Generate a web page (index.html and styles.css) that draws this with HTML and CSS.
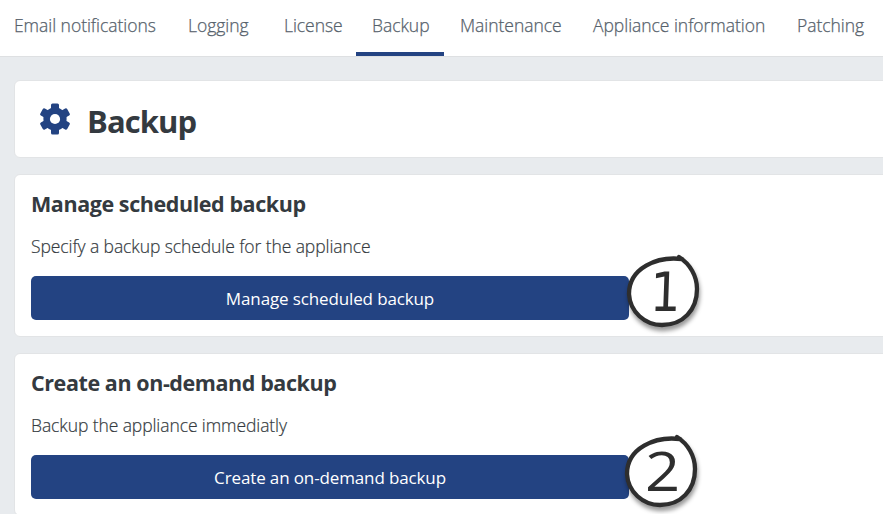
FILE: index.html
```html
<!DOCTYPE html>
<html lang="en">
<head>
<meta charset="utf-8">
<title>Backup</title>
<link rel="stylesheet" href="styles.css">
</head>
<body>
<nav class="tabs">
  <a class="tab t-email">Email notifications</a>
  <a class="tab t-logging">Logging</a>
  <a class="tab t-license">License</a>
  <a class="tab t-backup active">Backup</a>
  <a class="tab t-maintenance">Maintenance</a>
  <a class="tab t-appliance">Appliance information</a>
  <a class="tab t-patching">Patching</a>
</nav>
<main class="content">
  <header class="card title-card">
    <svg class="gear" width="32" height="32" viewBox="-16 -16 32 32">
      <g fill="#234382">
        <circle r="11.6"/>
        <rect id="tooth" x="-4" y="-15.5" width="8" height="31" rx="1.5"/>
        <use href="#tooth" transform="rotate(60)"/>
        <use href="#tooth" transform="rotate(120)"/>
      </g>
      <circle r="5.1" fill="#fff"/>
    </svg>
    <h1>Backup</h1>
  </header>
  <section class="card">
    <h2>Manage scheduled backup</h2>
    <p>Specify a backup schedule for the appliance</p>
    <div class="action">
      <button>Manage scheduled backup</button>
      <svg class="marker" width="84" height="84" viewBox="0 0 84 84">
        <path d="M61 7C36 4 8 16 8 42C9 60 24 73 41 73C62 73 76 58 76 37C76 24 69 12 58 5"/>
        <text class="digit one" transform="translate(28.5 58.5) skewX(-2) scale(.94 1.06)">1</text>
      </svg>
    </div>
  </section>
  <section class="card">
    <h2>Create an on-demand backup</h2>
    <p>Backup the appliance immediatly</p>
    <div class="action">
      <button>Create an on-demand backup</button>
      <svg class="marker second" width="84" height="84" viewBox="0 0 84 84">
        <path d="M61 7C36 4 8 16 8 42C9 60 24 73 41 73C62 73 76 58 76 37C76 24 69 12 58 5"/>
        <text class="digit two" transform="translate(26 58.5) scale(1.16 1.04)">2</text>
      </svg>
    </div>
  </section>
</main>
</body>
</html>
```
FILE: styles.css
```css
* { box-sizing: border-box; }
body {
  margin: 0;
  height: 514px;
  overflow: hidden;
  background: #e8ebee;
  color: #343a40;
  font: 300 17.5px/24px "Open Sans", "Noto Sans", sans-serif;
}
.tabs {
  display: flex;
  height: 57px;
  background: #fff;
  border-bottom: 1px solid #dee0e2;
  color: #56616b;
  letter-spacing: -.04px;
  -webkit-text-stroke: .25px currentColor;
}
.tab {
  flex: none;
  height: 56px;
  padding: 13px 0 0 16px;
  white-space: nowrap;
  border-bottom: 4px solid transparent;
}
.t-email { width: 172px; padding-left: 14px; }
.t-logging { width: 96px; }
.t-license { width: 88px; }
.t-backup { width: 88px; }
.t-maintenance { width: 133px; }
.t-appliance { width: 204px; }
.t-patching { width: 100px; }
.active { border-bottom-color: #234382; }
.content {
  display: flex;
  flex-direction: column;
  gap: 16px;
  padding: 23px 0 0 14px;
}
.card {
  width: 900px;
  height: 163px;
  flex: none;
  padding: 14px 16px;
  background: #fff;
  border: 1px solid #e2e4e6;
  border-radius: 6px;
}
.title-card {
  display: flex;
  height: 78px;
  padding: 22px 24px;
  gap: 16px;
}
h1 {
  margin: 0;
  font-size: 31px;
  font-weight: 700;
  line-height: 36px;
  letter-spacing: -.9px;
}
h2 {
  margin: 0;
  font-size: 21.5px;
  font-weight: 700;
  line-height: 30px;
  letter-spacing: -.42px;
}
p {
  margin: 14px 0 17px;
  line-height: 26px;
  white-space: nowrap;
  letter-spacing: -.09px;
  -webkit-text-stroke: .2px currentColor;
}
.action { position: relative; }
button {
  display: block;
  width: 598px;
  height: 44px;
  padding: 2px 0 0;
  border: 0;
  border-radius: 5px;
  background: #234382;
  color: #fff;
  font: 400 17px/24px "Open Sans", "Noto Sans", sans-serif;
  letter-spacing: -.13px;
}
.marker {
  position: absolute;
  left: 590px;
  top: -24px;
  overflow: visible;
  filter: drop-shadow(1px 4px 2px rgba(0, 0, 0, .4));
}
.marker.second { left: 588px; top: -23px; }
.marker path { fill: #fff; stroke: #2e2e2e; stroke-width: 4.3; stroke-linecap: round; stroke-linejoin: round; }
.digit { fill: #2e2e2e; font-weight: 400; }
.one { font-family: "DejaVu Sans", sans-serif; font-size: 51px; }
.two { font-family: "Open Sans", sans-serif; font-size: 53px; }
```
